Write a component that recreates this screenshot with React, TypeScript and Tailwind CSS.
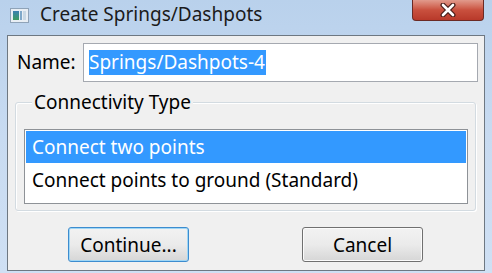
import React from 'react';

const font = { fontFamily: '"Noto Sans", "Open Sans", sans-serif' };

const App: React.FC = () => {
    return (
        <div
            className="w-[492px] h-[273px] overflow-hidden bg-gradient-to-b from-[#b9d1ec] via-[#c8dbf1] to-[#cfe0f4] flex flex-col text-black"
            style={font}
        >
            {/* Title bar */}
            <div className="h-[35px] flex items-start shrink-0">
                <div className="mt-[8px] ml-[10px] w-[19px] h-[15px] border border-[#8fa3b8] bg-[#e8eef4] flex p-[2px] gap-[1px]">
                    <div className="w-[7px] h-full bg-gradient-to-b from-[#3d7fb0] to-[#3f9a5a]"></div>
                    <div className="w-[3px] h-full bg-[#7fa8c9]"></div>
                    <div className="w-[3px] h-full bg-[#c9d8e4]"></div>
                </div>
                <div className="ml-[11px] mt-[1px] text-[19px] leading-[26px] text-[#1b1b1b]">Create Springs/Dashpots</div>
                <div className="ml-auto mr-[8px] w-[72px] h-[21px] rounded-b-[4px] border border-t-0 border-[#6b2a24] bg-gradient-to-b from-[#e19a8c] via-[#c9503e] to-[#b8392a] flex items-center justify-center">
                    <svg width="18" height="14" viewBox="0 0 18 14">
                        <path d="M4 2 L14 12 M14 2 L4 12" stroke="#4a1f1a" strokeWidth="5" strokeLinecap="round" />
                        <path d="M4 2 L14 12 M14 2 L4 12" stroke="#ffffff" strokeWidth="2.6" strokeLinecap="round" />
                    </svg>
                </div>
            </div>

            {/* Client area */}
            <div className="mx-[7px] w-[478px] h-[236px] border border-[#6e7882] bg-[#f0f0f0] flex flex-col shrink-0">
                {/* Name row */}
                <div className="mt-[7px] h-[39px] flex items-center pl-[9px] pr-[6px]">
                    <span className="text-[19px] leading-[25px]">Name:</span>
                    <div className="ml-auto w-[395px] h-full border border-[#a5a9b0] bg-white flex items-center pl-[5px]">
                        <span className="bg-[#3399ff] text-white text-[19px] h-[25px] leading-[25px] pr-[1px]">Springs/Dashpots-4</span>
                    </div>
                </div>

                {/* Connectivity Type group */}
                <div className="relative mt-[20px] ml-[7px] w-[461px] h-[109px] border border-[#d3dbe1] rounded-[3px] shadow-[inset_1px_1px_0_#ffffff,1px_1px_0_#ffffff]">
                    <span className="absolute left-[16px] top-[-13px] px-[2px] bg-[#f0f0f0] text-[19px] leading-[24px]">Connectivity Type</span>
                    <div className="mt-[26px] ml-[8px] w-[444px] h-[75px] border border-[#8e9297] bg-white p-[1px] flex flex-col">
                        <div className="h-[32px] bg-[#3399ff] text-white text-[19px] leading-[32px] pl-[6px]">Connect two points</div>
                        <div className="h-[34px] text-[19px] leading-[34px] pl-[6px]">Connect points to ground (Standard)</div>
                    </div>
                </div>

                {/* Buttons */}
                <div className="mt-[16px] flex pl-[60px] gap-[113px]">
                    <button className="w-[121px] h-[35px] rounded-[3px] border border-[#3c8ccf] shadow-[inset_0_0_0_1px_#9fd6f5] bg-gradient-to-b from-[#f2f2f2] via-[#ebebeb] to-[#d6d6d6] text-[19px] leading-[24px]">
                        Continue...
                    </button>
                    <button className="w-[121px] h-[35px] rounded-[3px] border border-[#707070] shadow-[inset_0_0_0_1px_#fbfbfb] bg-gradient-to-b from-[#f2f2f2] via-[#ebebeb] to-[#d6d6d6] text-[19px] leading-[24px]">
                        Cancel
                    </button>
                </div>
            </div>
        </div>
    );
};

export default App;
